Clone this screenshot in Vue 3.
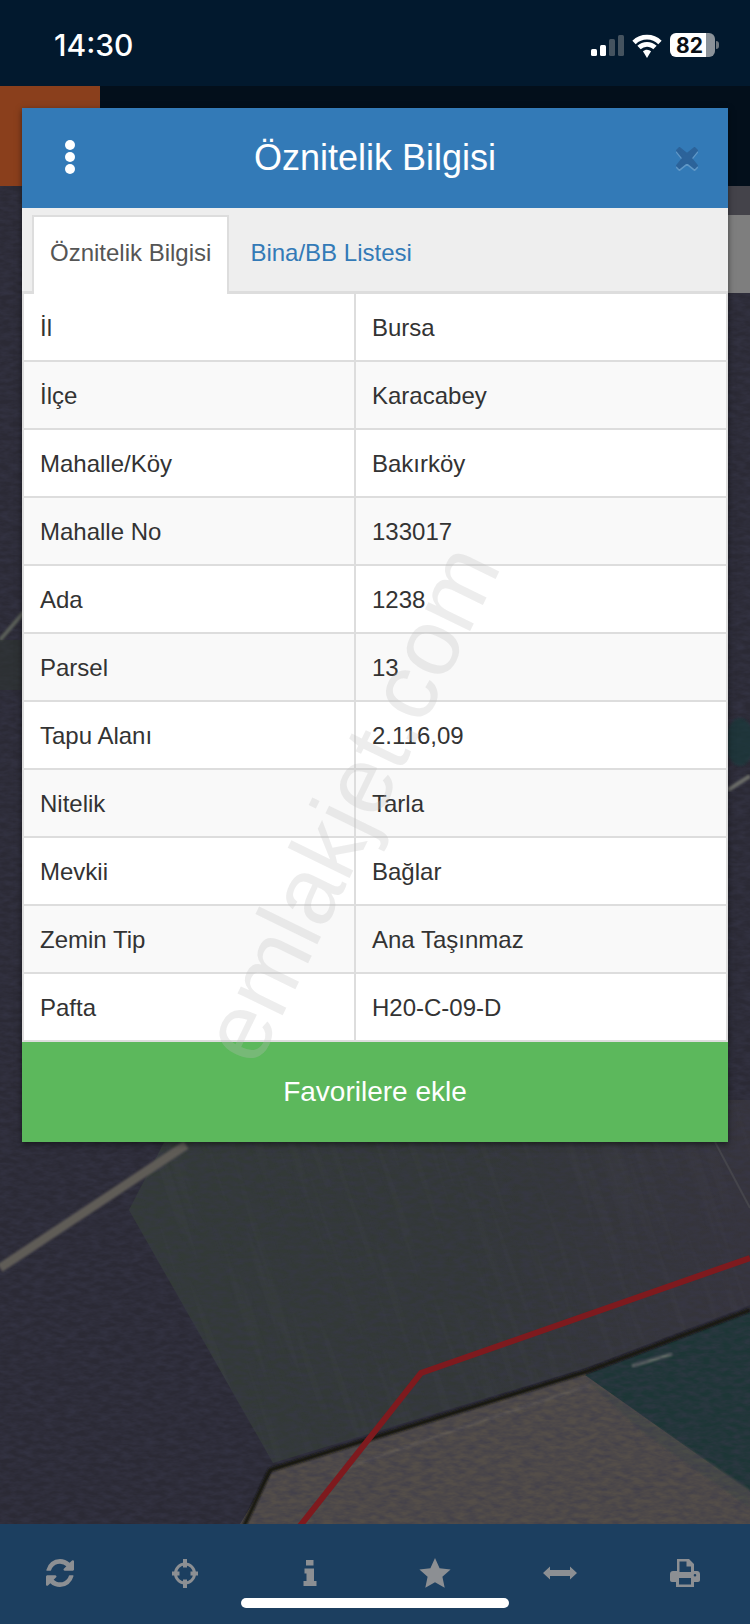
<script setup>
const rows = [
  ['İl', 'Bursa'],
  ['İlçe', 'Karacabey'],
  ['Mahalle/Köy', 'Bakırköy'],
  ['Mahalle No', '133017'],
  ['Ada', '1238'],
  ['Parsel', '13'],
  ['Tapu Alanı', '2.116,09'],
  ['Nitelik', 'Tarla'],
  ['Mevkii', 'Bağlar'],
  ['Zemin Tip', 'Ana Taşınmaz'],
  ['Pafta', 'H20-C-09-D'],
]
</script>

<template>
  <div class="screen">
    <header class="status">
      <span class="time">14:30</span>
      <div class="status-icons">
        <div class="signal">
          <i class="b1"></i><i class="b2"></i><i class="b3"></i><i class="b4"></i>
        </div>
        <svg class="wifi" width="36" height="25" viewBox="0 0 30 21">
          <path d="M15 5.500c3.700 0 7 1.500 9.500 3.900l2.800-2.900A17.600 17.600 0 0 0 15 1.500 17.600 17.600 0 0 0 2.700 6.500l2.800 2.900A13.600 13.600 0 0 1 15 5.500z" fill="#fff"/>
          <path d="M15 11.500c2 0 3.900.8 5.300 2.100l2.800-2.900A11.700 11.700 0 0 0 15 7.500c-3.100 0-6 1.200-8.100 3.200l2.800 2.900A7.700 7.700 0 0 1 15 11.500z" fill="#fff"/>
          <path d="M15 14c-1.300 0-2.500.5-3.400 1.400L15 21l3.400-5.600A4.900 4.900 0 0 0 15 14z" fill="#fff"/>
        </svg>
        <div class="battery">
          <div class="battery-body"><span>82</span></div>
          <i class="battery-tip"></i>
        </div>
      </div>
    </header>

    <main class="map">
      <svg class="map-art" viewBox="0 86 750 1438" preserveAspectRatio="none">
        <defs>
          <filter id="grain" x="0" y="0" width="100%" height="100%">
            <feTurbulence type="fractalNoise" baseFrequency="0.09 0.22" numOctaves="3" seed="7"/>
            <feColorMatrix type="matrix" values="0 0 0 0 0.04  0 0 0 0 0.04  0 0 0 0 0.07  1.800 0 0 0 -0.50"/>
          </filter>
          <filter id="lines" x="0" y="0" width="100%" height="100%">
            <feTurbulence type="fractalNoise" baseFrequency="0.12 0.006" numOctaves="2" seed="4"/>
            <feColorMatrix type="matrix" values="0 0 0 0 0.55  0 0 0 0 0.58  0 0 0 0 0.55  1.100 0 0 0 -0.52"/>
          </filter>
          <filter id="soft" x="-10%" y="-10%" width="120%" height="120%">
            <feGaussianBlur stdDeviation="1"/>
          </filter>
          <linearGradient id="field" x1="0" y1="0" x2="1" y2="0">
            <stop offset="0" stop-color="#333b37"/>
            <stop offset="0.55" stop-color="#333837"/>
            <stop offset="1" stop-color="#36343c"/>
          </linearGradient>
          <clipPath id="fieldClip">
            <polygon points="186,1100 129,1210 273,1463 585,1368 750,1305 750,1100"/>
          </clipPath>
        </defs>
        <rect x="0" y="86" width="750" height="1438" fill="#2b2a35"/>
        <polygon points="186,1100 129,1210 273,1463 585,1368 750,1305 750,1100" fill="url(#field)"/>
        <polygon points="240,1524 273,1470 585,1373 750,1492 750,1524" fill="#544e49"/>
        <polygon points="585,1375 750,1312 750,1492" fill="#1d3636"/>
        <polygon points="585,1378 750,1490 750,1508 640,1430" fill="#494c47" filter="url(#soft)"/>
        <polyline points="632,1366 672,1354" fill="none" stroke="#69716c" stroke-width="3" filter="url(#soft)"/>
        <polyline points="340,1470 470,1425 590,1385" fill="none" stroke="#655f58" stroke-width="2" filter="url(#soft)"/>
        <rect x="0" y="86" width="750" height="1438" filter="url(#grain)" opacity="0.6"/>
        <g clip-path="url(#fieldClip)">
          <rect x="-50" y="1000" width="1000" height="600" transform="rotate(-18 450 1300)" filter="url(#lines)" opacity="0.07"/>
        </g>
        <polyline points="0,1268 186,1145" fill="none" stroke="#5f5b56" stroke-width="9" filter="url(#soft)"/>
        <polyline points="715,1142 750,1208" fill="none" stroke="#45454b" stroke-width="2"/>
        <polyline points="244,1526 270,1470 585,1372 750,1310" fill="none" stroke="#14140f" stroke-width="4" filter="url(#soft)"/>
        <polyline points="750,1258 421,1373 300,1526" fill="none" stroke="#7e1a1e" stroke-width="6"/>
        <rect x="0" y="86" width="750" height="100" fill="#030f1b"/>
        <rect x="0" y="86" width="100" height="100" fill="#8a3f1c"/>
        <rect x="726" y="186" width="24" height="30" fill="#44434a"/>
        <rect x="726" y="215" width="24" height="78" fill="#7e7e7e"/>
        <polyline points="0,640 24,612" fill="none" stroke="#5a5e58" stroke-width="4" filter="url(#soft)"/>
        <rect x="0" y="640" width="24" height="50" fill="#2d3530" opacity="0.5"/>
        <ellipse cx="740" cy="742" rx="14" ry="24" fill="#173a3a" opacity="0.6" filter="url(#soft)"/>
        <polyline points="728,790 750,776" fill="none" stroke="#6a6c67" stroke-width="4" filter="url(#soft)"/>
      </svg>

      <section class="modal">
        <div class="modal-head">
          <div class="dots"><i></i><i></i><i></i></div>
          <h1>Öznitelik Bilgisi</h1>
          <svg class="close" width="30" height="30" viewBox="0 0 30 30">
            <path d="M5 7.500 7.500 5 15 11l7.500-6L25 7.500 19 15l6 7.500-2.500 2.500L15 19l-7.500 6L5 22.500 11 15z" stroke-width="2" stroke-linejoin="round"/>
          </svg>
        </div>

        <nav class="tabs">
          <span class="tab active">Öznitelik Bilgisi</span>
          <span class="tab">Bina/BB Listesi</span>
        </nav>

        <div class="table">
          <div v-for="(row, i) in rows" :key="row[0]" class="row" :class="{ odd: i % 2 === 1 }">
            <div class="cell name">{{ row[0] }}</div>
            <div class="cell value">{{ row[1] }}</div>
          </div>
        </div>

        <button class="fav">Favorilere ekle</button>
        <div class="watermark">emlakjet.com</div>
      </section>
    </main>

    <footer class="toolbar">
      <div class="tool">
        <svg width="28" height="28" viewBox="0 0 1536 1536"><path d="M1511 928q0 5-1 7-64 268-268 434.500t-478 166.500q-146 0-282.500-55t-243.500-157l-129 129q-19 19-45 19t-45-19-19-45v-448q0-26 19-45t45-19h448q26 0 45 19t19 45-19 45l-137 137q71 66 161 102t187 36q134 0 250-65t186-179q11-17 53-117 8-23 30-23h192q13 0 22.500 9.500t9.500 22.500zm25-800v448q0 26-19 45t-45 19h-448q-26 0-45-19t-19-45 19-45l138-138q-148-137-349-137-134 0-250 65t-186 179q-11 17-53 117-8 23-30 23h-199q-13 0-22.500-9.500t-9.500-22.500v-7q65-268 270-434.500t480-166.500q146 0 284 55.500t245 156.500l130-129q19-19 45-19t45 19 19 45z"/></svg>
      </div>
      <div class="tool">
        <svg width="28" height="29" viewBox="0 0 28 29">
          <circle cx="14" cy="14.500" r="9.500" fill="none" stroke="#8c8f93" stroke-width="3"/>
          <path d="M12 0h4v8.500h-4zM12 20.500h4V29h-4zM1 12.500h7.500v4H1zM19.500 12.500H27v4h-7.500z"/>
        </svg>
      </div>
      <div class="tool">
        <svg width="14" height="26" viewBox="0 0 14 26">
          <path d="M3 0h7.500v5.500H3zM1.500 8.500h9.500v12.500h2.500v5H.5v-5h3v-7.500h-2z"/>
        </svg>
      </div>
      <div class="tool">
        <svg width="32" height="30" viewBox="0 0 32 30">
          <path d="M16 0l4.600 10.200 11 1.200-8.200 7.400 2.300 10.900L16 24.200 6.300 29.700l2.300-10.900L.4 11.400l11-1.200z"/>
        </svg>
      </div>
      <div class="tool">
        <svg width="34" height="14" viewBox="0 0 34 14">
          <path d="M0 7l7-6.500V4h20V.5L34 7l-7 6.500V10H7v3.500z"/>
        </svg>
      </div>
      <div class="tool">
        <svg width="30" height="28" viewBox="0 0 30 28">
          <path fill-rule="evenodd" d="M7 0h12l5 5v7h3c1.700 0 3 1.300 3 3v6c0 1.200-.8 2-2 2h-4v5H6v-5H2c-1.200 0-2-.8-2-2v-6c0-1.700 1.300-3 3-3h4zM9.500 2.500V13h11.500V7.500h-4.500v-5zM9 19v6.500h12V19zM25 15a1.300 1.300 0 1 0 0 2.600 1.300 1.300 0 0 0 0-2.600z"/>
        </svg>
      </div>
      <i class="home"></i>
    </footer>
  </div>
</template>

<style scoped>
.screen {
  width: 750px;
  height: 1624px;
  display: flex;
  flex-direction: column;
  overflow: hidden;
  font-family: "Liberation Sans", Arial, sans-serif;
  background: #2b2a35;
}

.status {
  height: 86px;
  flex: none;
  background: #02192e;
  display: flex;
  align-items: center;
  justify-content: space-between;
  padding: 4px 31px 0 54px;
  box-sizing: border-box;
}
.time {
  color: #fff;
  font-family: Inter, "Liberation Sans", sans-serif;
  font-size: 30px;
  font-weight: 500;
}
.status-icons {
  display: flex;
  align-items: center;
  gap: 5px;
}
.signal {
  display: flex;
  align-items: flex-end;
  gap: 3px;
  height: 21px;
}
.signal i {
  width: 6px;
  border-radius: 1.500px;
  background: #fff;
}
.signal .b1 { height: 7px; }
.signal .b2 { height: 11px; }
.signal .b3 { height: 17px; background: #45535f; }
.signal .b4 { height: 21px; background: #45535f; }
.wifi { display: block; }
.battery {
  display: flex;
  align-items: center;
  gap: 1px;
}
.battery-body {
  width: 45px;
  height: 24px;
  border-radius: 6px;
  background: linear-gradient(90deg, #fff 0 80%, #8b9299 80% 100%);
  display: flex;
  align-items: center;
  padding-left: 6px;
  box-sizing: border-box;
}
.battery-body span {
  color: #0a0f15;
  font-family: Inter, "Liberation Sans", sans-serif;
  font-size: 21px;
  font-weight: 700;
}
.battery-tip {
  width: 3px;
  height: 8px;
  border-radius: 0 3px 3px 0;
  background: #6d767e;
}

.map {
  flex: 1;
  position: relative;
  min-height: 0;
}
.map-art {
  position: absolute;
  inset: 0;
  width: 100%;
  height: 100%;
  display: block;
}

.modal {
  position: relative;
  margin: 22px 22px 0;
  box-shadow: 0 2px 6px rgba(0, 0, 0, 0.5);
  overflow: hidden;
}
.modal-head {
  height: 100px;
  background: #337ab7;
  display: flex;
  align-items: center;
  justify-content: center;
  position: relative;
}
.modal-head h1 {
  margin: 0;
  color: #fff;
  font-size: 36px;
  font-weight: 400;
}
.dots {
  position: absolute;
  left: 43px;
  top: 32px;
  display: flex;
  flex-direction: column;
  gap: 2px;
}
.dots i {
  width: 10px;
  height: 10px;
  border-radius: 50%;
  background: #fff;
}
.close {
  position: absolute;
  right: 26px;
  top: 35px;
  fill: #2c639a;
  stroke: #2c639a;
  filter: drop-shadow(0 2px 0 rgba(255, 255, 255, 0.22));
}

.tabs {
  height: 86px;
  box-sizing: border-box;
  background: #eee;
  border-bottom: 3px solid #ddd;
  padding: 7px 0 0 10px;
  display: flex;
  gap: 1px;
}
.tab {
  height: 79px;
  box-sizing: border-box;
  padding: 0 18px 5px;
  display: flex;
  align-items: center;
  font-size: 24px;
  color: #337ab7;
  border: 2px solid transparent;
  border-bottom: 0;
}
.tab.active {
  color: #555;
  background: #fff;
  border-color: #ddd;
  padding: 0 16px 5px;
}

.table {
  background: #fff;
  border-left: 2px solid #ddd;
  border-right: 2px solid #ddd;
}
.row {
  height: 68px;
  box-sizing: border-box;
  border-bottom: 2px solid #ddd;
  display: grid;
  grid-template-columns: 332px 1fr;
  background: #fff;
}
.row.odd { background: #f9f9f9; }
.cell {
  display: flex;
  align-items: center;
  font-size: 24px;
  color: #333;
  padding: 2px 0 0 16px;
}
.cell.name { border-right: 2px solid #ddd; }

.fav {
  display: block;
  width: 100%;
  height: 100px;
  border: 0;
  padding: 0;
  background: #5cb85c;
  color: #fff;
  font-family: inherit;
  font-size: 28px;
}

.watermark {
  position: absolute;
  left: 328px;
  top: 695px;
  transform: translate(-50%, -50%) rotate(-64deg);
  white-space: nowrap;
  font-size: 95px;
  color: rgba(190, 190, 190, 0.28);
  pointer-events: none;
}

.toolbar {
  height: 100px;
  flex: none;
  background: #1c3f60;
  display: grid;
  grid-template-columns: repeat(6, 125px);
  position: relative;
  padding: 30px 0 0 0;
  box-sizing: border-box;
  align-items: start;
}
.tool {
  height: 38px;
  margin-left: -5px;
  display: flex;
  align-items: center;
  justify-content: center;
}
.tool svg {
  display: block;
  fill: #8c8f93;
}
.home {
  position: absolute;
  left: 241px;
  top: 74px;
  width: 268px;
  height: 10px;
  border-radius: 5px;
  background: #fff;
}
</style>
